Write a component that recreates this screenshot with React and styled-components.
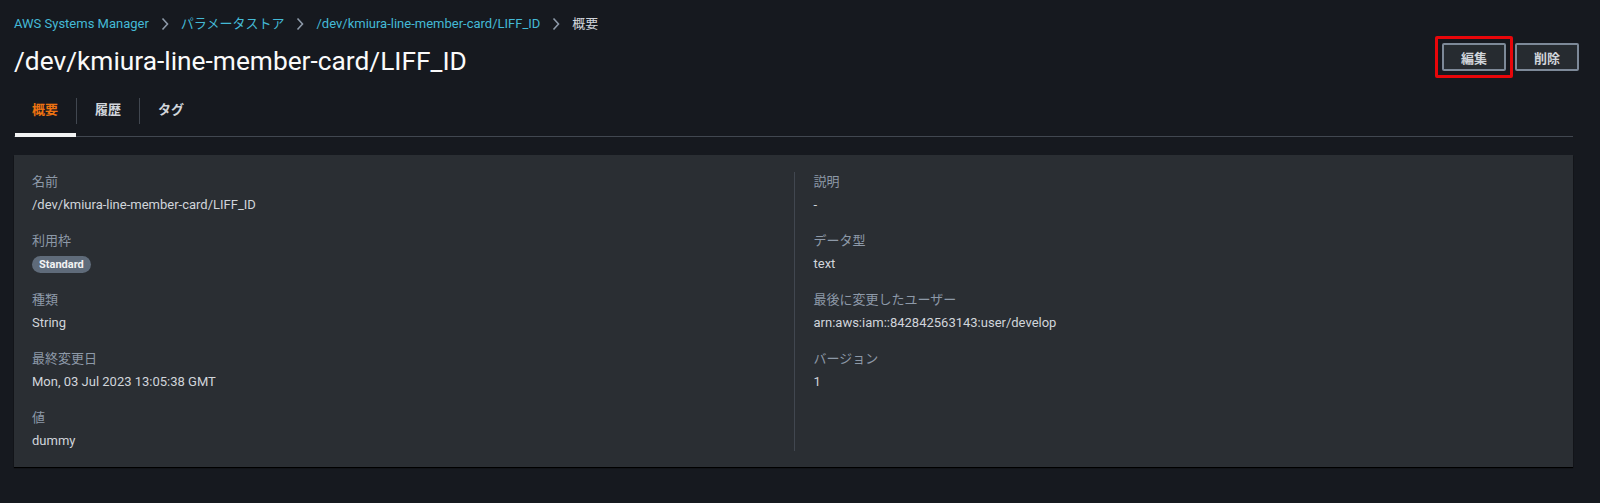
import React from "react";
import styled, { createGlobalStyle } from "styled-components";

const GlobalStyle = createGlobalStyle`
  html, body {
    margin: 0;
    padding: 0;
    background: #16191f;
  }
  body {
    font-family: Roboto, "Noto Sans CJK JP", sans-serif;
    font-size: 13px;
    color: #d1d5db;
  }
`;

const Page = styled.div`
  min-height: 503px;
  padding: 14px 27px 20px 14px;
  box-sizing: border-box;
  background: #16191f;
`;

const Breadcrumbs = styled.nav`
  display: flex;
  align-items: center;
  gap: 12px;
  line-height: 20px;
  font-size: 13px;
`;

const Crumb = styled.a`
  color: ${(p) => (p.$current ? "#d1d5db" : "#44b9d6")};
  text-decoration: none;
`;

const HeaderRow = styled.div`
  display: flex;
  align-items: flex-start;
  justify-content: space-between;
  margin-top: 9px;
  margin-right: -6px;
`;

const Title = styled.h1`
  margin: 0;
  font-size: 26.3px;
  font-weight: 400;
  line-height: 36px;
  color: #fafafa;
`;

const Actions = styled.div`
  display: flex;
  align-items: center;
  gap: 2px;
  margin-top: -7px;
`;

// red annotation frame drawn around the highlighted button
const HighlightFrame = styled.span`
  display: inline-flex;
  padding: 4px;
  border: 3px solid #e8060a;
  border-radius: 2px;
`;

const Button = styled.button`
  height: 28px;
  padding: 0 17px;
  background: #262b30;
  border: 2px solid #7d8998;
  border-radius: 2px;
  color: #d1d5db;
  font-family: inherit;
  font-size: 13px;
  font-weight: 700;
  cursor: pointer;
`;

const TabList = styled.div`
  display: flex;
  margin-top: 7px;
  border-bottom: 1px solid #414750;
`;

const Tab = styled.div`
  position: relative;
  padding: 14px 18px 16px;
  font-weight: 700;
  line-height: 20px;
  color: ${(p) => (p.$active ? "#ec7211" : "#d1d5db")};

  &::after {
    content: "";
    display: ${(p) => (p.$active ? "block" : "none")};
    position: absolute;
    left: 1px;
    right: 0;
    bottom: -1px;
    height: 4px;
    background: #f2f3f3;
  }
`;

const TabSeparator = styled.span`
  width: 1px;
  height: 26px;
  align-self: center;
  background: #414750;
`;

const Card = styled.section`
  margin-top: 18px;
  background: #2a2e33;
  box-shadow: 0 1px 1px 0 #000;
  padding: 17px 18px 16px;
  display: grid;
  grid-template-columns: 1fr 1fr;
`;

const Column = styled.div`
  display: flex;
  flex-direction: column;
  gap: 16px;
  ${(p) =>
    p.$divided &&
    `
    border-left: 1px solid #414750;
    padding-left: 19px;
  `}
`;

const Field = styled.div`
  display: flex;
  flex-direction: column;
  gap: 3px;
`;

const Label = styled.div`
  color: #8d99a8;
  line-height: 20px;
`;

const Value = styled.div`
  color: #d1d5db;
  line-height: 20px;
  height: 20px;
  display: flex;
  align-items: center;
`;

const Badge = styled.span`
  display: inline-block;
  height: 17px;
  line-height: 17px;
  padding: 0 7px;
  border-radius: 9px;
  background: #5f6b7a;
  color: #f2f3f3;
  font-size: 11px;
  font-weight: 700;
`;

const Chevron = () => (
  <svg width="8" height="14" viewBox="0 0 8 14" fill="none">
    <path d="M1.5 1.5 L6.5 7 L1.5 12.5" stroke="#8d99a8" strokeWidth="1.6" />
  </svg>
);

const crumbs = [
  { label: "AWS Systems Manager" },
  { label: "パラメータストア" },
  { label: "/dev/kmiura-line-member-card/LIFF_ID" },
  { label: "概要", current: true },
];

const leftFields = [
  { label: "名前", value: "/dev/kmiura-line-member-card/LIFF_ID" },
  { label: "利用枠", badge: "Standard" },
  { label: "種類", value: "String" },
  { label: "最終変更日", value: "Mon, 03 Jul 2023 13:05:38 GMT" },
  { label: "値", value: "dummy" },
];

const rightFields = [
  { label: "説明", value: "-" },
  { label: "データ型", value: "text" },
  { label: "最後に変更したユーザー", value: "arn:aws:iam::842842563143:user/develop" },
  { label: "バージョン", value: "1" },
];

const FieldList = ({ fields }) =>
  fields.map((f) => (
    <Field key={f.label}>
      <Label>{f.label}</Label>
      <Value>{f.badge ? <Badge>{f.badge}</Badge> : f.value}</Value>
    </Field>
  ));

const App = () => (
  <Page>
    <GlobalStyle />
    <Breadcrumbs>
      {crumbs.map((c, i) => (
        <React.Fragment key={c.label}>
          {i > 0 && <Chevron />}
          <Crumb href="#" $current={c.current}>
            {c.label}
          </Crumb>
        </React.Fragment>
      ))}
    </Breadcrumbs>

    <HeaderRow>
      <Title>/dev/kmiura-line-member-card/LIFF_ID</Title>
      <Actions>
        <HighlightFrame>
          <Button>編集</Button>
        </HighlightFrame>
        <Button>削除</Button>
      </Actions>
    </HeaderRow>

    <TabList>
      <Tab $active>概要</Tab>
      <TabSeparator />
      <Tab>履歴</Tab>
      <TabSeparator />
      <Tab>タグ</Tab>
    </TabList>

    <Card>
      <Column>
        <FieldList fields={leftFields} />
      </Column>
      <Column $divided>
        <FieldList fields={rightFields} />
      </Column>
    </Card>
  </Page>
);

export default App;
